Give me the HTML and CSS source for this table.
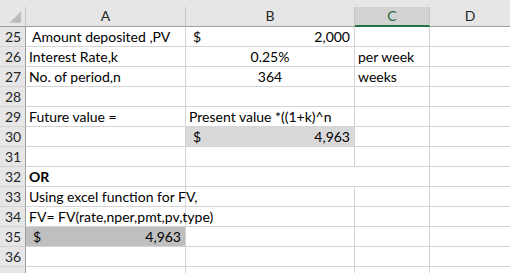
FILE: index.html
```html
<!DOCTYPE html>
<html>
<head>
<meta charset="utf-8">
<link rel="stylesheet" href="styles.css">
</head>
<body>
<div class="sheet">
  <div class="strip"></div>
  <div class="grid">
    <div class="corner"><svg width="26" height="19" viewBox="0 0 26 19"><polygon points="22,4 22,16 10,16" fill="#bcbcbc"/></svg></div>
    <div class="colhead">A</div>
    <div class="colhead">B</div>
    <div class="colhead sel">C</div>
    <div class="colhead last">D</div>

    <div class="rowhead">25</div>
    <div class="cell">&nbsp;Amount deposited ,PV</div>
    <div class="cell acct"><span>$</span><span>2,000</span></div>
    <div class="cell"></div>
    <div class="cell last"></div>

    <div class="rowhead">26</div>
    <div class="cell">Interest Rate,k</div>
    <div class="cell center">0.25%</div>
    <div class="cell">per week</div>
    <div class="cell last"></div>

    <div class="rowhead">27</div>
    <div class="cell">No. of period,n</div>
    <div class="cell center">364</div>
    <div class="cell">weeks</div>
    <div class="cell last"></div>

    <div class="rowhead">28</div>
    <div class="cell"></div>
    <div class="cell"></div>
    <div class="cell"></div>
    <div class="cell last"></div>

    <div class="rowhead">29</div>
    <div class="cell">Future value =</div>
    <div class="cell">Present value *((1+k)^n</div>
    <div class="cell"></div>
    <div class="cell last"></div>

    <div class="rowhead">30</div>
    <div class="cell"></div>
    <div class="cell acct light"><span>$</span><span>4,963</span></div>
    <div class="cell"></div>
    <div class="cell last"></div>

    <div class="rowhead">31</div>
    <div class="cell"></div>
    <div class="cell"></div>
    <div class="cell"></div>
    <div class="cell last"></div>

    <div class="rowhead">32</div>
    <div class="cell bold">OR</div>
    <div class="cell span2"></div>
    <div class="cell last"></div>

    <div class="rowhead">33</div>
    <div class="cell">Using excel function for FV,</div>
    <div class="cell"></div>
    <div class="cell"></div>
    <div class="cell last"></div>

    <div class="rowhead">34</div>
    <div class="cell">FV= FV(rate,nper,pmt,pv,type)</div>
    <div class="cell"></div>
    <div class="cell"></div>
    <div class="cell last"></div>

    <div class="rowhead">35</div>
    <div class="cell acct dark"><span>$</span><span>4,963</span></div>
    <div class="cell"></div>
    <div class="cell"></div>
    <div class="cell last"></div>

    <div class="rowhead">36</div>
    <div class="cell"></div>
    <div class="cell"></div>
    <div class="cell"></div>
    <div class="cell last"></div>

    <div class="rowhead"></div>
    <div class="cell"></div>
    <div class="cell"></div>
    <div class="cell"></div>
    <div class="cell last"></div>
  </div>
</div>
</body>
</html>
```

FILE: styles.css
```css
html, body {
  margin: 0;
  padding: 0;
  background: #ffffff;
  overflow: hidden;
}
.sheet {
  width: 510px;
  height: 273px;
  overflow: hidden;
  font-family: "Lato", "Liberation Sans", sans-serif;
  font-size: 14px;
  color: #000;
}
.strip {
  height: 7px;
  background: #e6e6e6;
}
.grid {
  display: grid;
  grid-template-columns: 26px 160px 169px 75px 1fr;
  grid-template-rows: 20px;
  grid-auto-rows: 20px;
}
.grid > div {
  box-sizing: border-box;
  white-space: nowrap;
  overflow: visible;
}
.corner {
  background: #e6e6e6;
  border-right: 1px solid #c6c6c6;
  border-bottom: 1px solid #9e9e9e;
  display: flex;
  align-items: flex-end;
}
.corner svg {
  display: block;
}
.colhead {
  background: #e6e6e6;
  border-right: 1px solid #c6c6c6;
  border-bottom: 1px solid #9e9e9e;
  text-align: center;
  line-height: 18px;
  color: #262626;
}
.colhead.sel {
  background: #d2d2d2;
  border-bottom: 2px solid #217346;
  color: #1c6b3b;
}
.rowhead {
  background: #e6e6e6;
  border-right: 1px solid #9e9e9e;
  border-bottom: 1px solid #d4d4d4;
  text-align: center;
  line-height: 19px;
  color: #262626;
  padding-left: 1px;
}
.cell {
  border-right: 1px solid #d4d4d4;
  border-bottom: 1px solid #d4d4d4;
  line-height: 19px;
  padding: 0 3px;
}
.last {
  border-right: none;
}
.center {
  text-align: center;
}
.bold {
  font-weight: bold;
}
.span2 {
  grid-column: span 2;
}
.acct {
  display: flex;
  justify-content: space-between;
  padding: 0 4px 0 7px;
}
.light {
  background: #d9d9d9;
}
.dark {
  background: #bfbfbf;
}
```
